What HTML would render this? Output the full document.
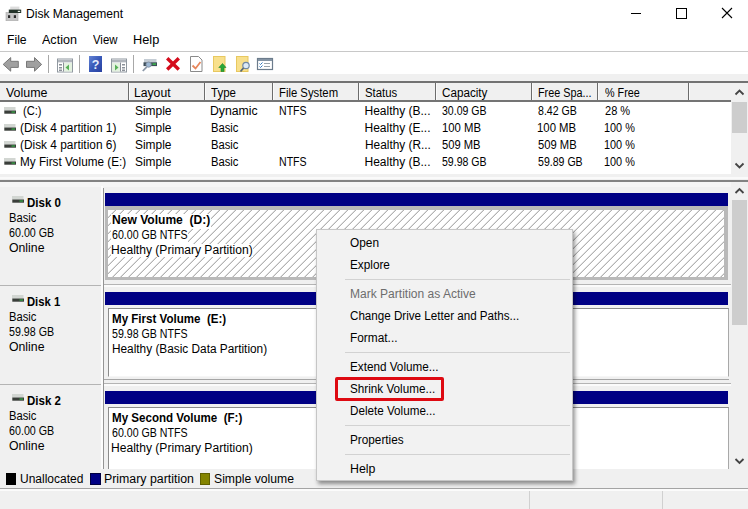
<!DOCTYPE html>
<html><head><meta charset="utf-8"><title>Disk Management</title>
<style>
*{box-sizing:border-box;margin:0;padding:0}
html,body{width:748px;height:509px;overflow:hidden;background:#fff}
body{font-family:"Liberation Sans",sans-serif;font-size:12px;color:#000;position:relative}
.a{position:absolute}
.t{position:absolute;white-space:pre;line-height:16px;height:16px;transform-origin:0 50%}
.hs{position:absolute;top:83px;width:1.500px;height:17px;background:#6c6c6c;margin-left:-0.400px;box-shadow:1px 0 0 #fafafa}
.di{position:absolute;width:12px;height:7px}
.bar{position:absolute;left:105px;width:622.500px;height:13px;background:#000084}
.left{position:absolute;left:0;width:101px;height:97px;background:#f0f0f0}
.vol{position:absolute;left:108px;width:621px;height:69px;background:#fff;border:1px solid #8c8c8c;border-bottom-color:#f6f6f6;border-right-color:#a8a8a8}
.dsep{position:absolute;left:0;width:731px;height:1px;background:#b4b4b4}
.sep{position:absolute;left:345px;width:225px;height:1px;background:#d2d2d2}
.tsep{position:absolute;top:55px;width:1px;height:18px;background:#a8a8a8}
</style></head><body>
<!-- title bar -->
<svg class="a" style="left:4px;top:5px" width="20" height="18" viewBox="4 5 20 18"><rect x="10.200" y="6.600" width="9.200" height="3.200" fill="#dcdcdc"/><rect x="6" y="12.500" width="12" height="8.200" fill="#c6c6c6" stroke="#a8a8a8" stroke-width=".6"/><rect x="8.800" y="9.600" width="12.400" height="3.400" fill="#24342a"/><rect x="17.800" y="10.800" width="2.400" height="1.200" fill="#e8f0e8"/><rect x="8" y="15.200" width="2.200" height="2.800" fill="#2c2c2c"/><rect x="13.800" y="15.200" width="2.200" height="2.800" fill="#2c2c2c"/></svg>
<svg class="a" style="left:625px;top:3px" width="115" height="22" viewBox="0 0 115 22"><path d="M6 10.500H16" stroke="#000" stroke-width="1" fill="none"/><rect x="51.500" y="5.500" width="10" height="10" stroke="#000" stroke-width="1" fill="none"/><path d="M97 5L107 15M107 5L97 15" stroke="#000" stroke-width="1.100" fill="none"/></svg>
<div class="a" style="left:0;top:51px;width:748px;height:1px;background:#c8c8c8"></div>
<!-- toolbar -->
<div class="a" style="left:0;top:74px;width:748px;height:8px;background:#f0f0f0"></div>
<i class="tsep" style="left:48px"></i><i class="tsep" style="left:79px"></i><i class="tsep" style="left:133px"></i>
<svg class="a" style="left:0;top:52px" width="290" height="24" viewBox="0 52 290 24">
<!-- back / forward arrows -->
<path d="M3.200 64.400L10.700 57.600V61.300H18.300V67.400H10.700V71.200Z" fill="#a0a0a0" stroke="#787878" stroke-width="1"/>
<path d="M41.600 64.400L34.500 57.600V61.300H26.500V67.400H34.500V71.200Z" fill="#a0a0a0" stroke="#787878" stroke-width="1"/>
<!-- console tree icons -->
<g transform="translate(0,.5)"><rect x="57.500" y="58.500" width="15" height="13" fill="#fff" stroke="#9098a0"/><rect x="58" y="59" width="14" height="3" fill="#c4c8ce"/><path d="M58 60.500H72" stroke="#8c949c" stroke-width=".7"/><rect x="59" y="63.500" width="3" height="1.500" fill="#8a9098"/><rect x="59" y="66.500" width="3" height="1.500" fill="#8a9098"/><rect x="59" y="69" width="3" height="1.500" fill="#8a9098"/><path d="M63.500 62V71" stroke="#8a9098"/><rect x="64" y="62.500" width="8" height="8.500" fill="#e4f2e0"/><path d="M69 64V70L65.500 67Z" fill="#58b058"/></g>
<g transform="translate(0,.5)"><rect x="111.500" y="58.500" width="15" height="13" fill="#fff" stroke="#9098a0"/><rect x="112" y="59" width="14" height="3" fill="#c4c8ce"/><path d="M112 60.500H126" stroke="#8c949c" stroke-width=".7"/><rect x="122" y="63.500" width="3" height="1.500" fill="#8a9098"/><rect x="122" y="66.500" width="3" height="1.500" fill="#8a9098"/><rect x="122" y="69" width="3" height="1.500" fill="#8a9098"/><path d="M120.500 62V71" stroke="#8a9098"/><rect x="112" y="62.500" width="8" height="8.500" fill="#e4f2e0"/><path d="M115 64V70L118.500 67Z" fill="#58b058"/></g>
<!-- help -->
<defs><linearGradient id="hg" x1="0" y1="0" x2="1" y2="1"><stop offset="0" stop-color="#6484d4"/><stop offset=".5" stop-color="#3858b8"/><stop offset="1" stop-color="#2840a0"/></linearGradient></defs>
<rect x="89" y="56" width="13" height="16" fill="url(#hg)"/>
<text x="95.500" y="69" font-family="Liberation Sans, sans-serif" font-weight="bold" font-size="12.500" fill="#e4ecfc" text-anchor="middle">?</text>
<!-- drive+magnifier -->
<rect x="144" y="59" width="12.500" height="3.500" fill="#c4ccd4"/><rect x="143.500" y="62.300" width="13.500" height="3.800" fill="#3c4c58"/><rect x="152.500" y="63.300" width="3.500" height="1.600" fill="#3cb44c"/><circle cx="148.600" cy="64.600" r="2.600" fill="#9cb8d4" stroke="#8494a8" stroke-width="1"/><path d="M146.800 66.800L142.800 71" stroke="#8c98a8" stroke-width="1.800"/>
<!-- red X -->
<path d="M167.200 58.300L178.800 69.500M178.800 58.300L167.200 69.500" stroke="#d40c1c" stroke-width="3.400"/>
<!-- doc w/ check -->
<path d="M190.500 56.500H198.500L202 60V71.500H190.500Z" fill="#fff" stroke="#8a8a8a"/><path d="M192.500 65.500L195.500 68.500L200.500 62" stroke="#e8875c" stroke-width="1.800" fill="none"/>
<!-- yellow docs -->
<rect x="213.500" y="56.500" width="11.500" height="15" fill="#f8e08c" stroke="#e8c860"/><path d="M221 71.500V67.500H218.800L222.500 63.500L226 67.500H224V71.500Z" fill="#28a838" stroke="#1c8428" stroke-width=".6"/>
<rect x="236.500" y="56.500" width="11.500" height="15" fill="#f8e08c" stroke="#e8c860"/><circle cx="246" cy="65.500" r="3.200" fill="#dceaf8" stroke="#7088a4" stroke-width="1.200"/><path d="M243.500 68L240.500 71.500" stroke="#566878" stroke-width="1.800"/>
<!-- checklist -->
<rect x="257.500" y="58.500" width="15" height="11" fill="#fff" stroke="#6c7c8c" stroke-width="1.200"/><rect x="258" y="59" width="14" height="2" fill="#8494a4"/><path d="M259.500 63.500L260.500 64.500L262.500 62.500M259.500 66.500L260.500 67.500L262.500 65.500" stroke="#3078c0" fill="none"/><path d="M264 63.500H270M264 66.500H270" stroke="#9aa4ac"/>
</svg>
<!-- list header -->
<div class="a" style="left:0;top:81px;width:748px;height:1.800px;background:#727272"></div><div class="a" style="left:0;top:83px;width:731px;height:17px;background:#f0f0f0"></div><div class="a" style="left:0;top:99.800px;width:731px;height:1.900px;background:#747474"></div>
<i class="hs" style="left:128px"></i><i class="hs" style="left:204px"></i><i class="hs" style="left:272px"></i><i class="hs" style="left:358px"></i><i class="hs" style="left:435px"></i><i class="hs" style="left:531px"></i><i class="hs" style="left:597px"></i><i class="hs" style="left:688px"></i>
<!-- list scrollbar -->
<div class="a" style="left:731px;top:83px;width:17px;height:91px;background:#f0f0f0"></div>
<div class="a" style="left:732px;top:101.500px;width:14.500px;height:31.500px;background:#cdcdcd"></div>
<svg class="a" style="left:731px;top:82px" width="17" height="93" viewBox="0 0 17 93"><path d="M4.500 12.500L8.500 8.500L12.500 12.500" stroke="#444" stroke-width="1.800" fill="none"/><path d="M4.500 81.500L8.500 85.500L12.500 81.500" stroke="#444" stroke-width="1.800" fill="none"/></svg>
<!-- row icons -->
<svg class="a" style="left:4px;top:107px" width="13" height="60" viewBox="0 0 13 60"><g id="dk"><rect x="0" y="0" width="11.500" height="3.600" fill="#d2d6d2"/><rect x="0.300" y="3.500" width="11.700" height="3.200" fill="#3a3e3a"/><rect x="7.500" y="4.400" width="3.500" height="1.300" fill="#34a444"/></g><use href="#dk" y="17"/><use href="#dk" y="34"/><use href="#dk" y="51"/></svg>
<!-- splitter -->
<div class="a" style="left:0;top:174px;width:748px;height:295px;background:#f0f0f0"></div>
<div class="a" style="left:0;top:177px;width:748px;height:2px;background:#fafafa"></div>
<div class="a" style="left:0;top:180px;width:748px;height:2px;background:#828282"></div>
<div class="a" style="left:0;top:182px;width:731px;height:5px;background:#f5f5f5"></div>
<!-- lower pane -->
<div class="a" style="left:101px;top:186px;width:2px;height:283px;background:#fcfcfc"></div>
<div class="a" style="left:103px;top:188px;width:1px;height:281px;background:#949494"></div>
<!-- disk 0 -->
<div class="bar" style="top:193px"></div>
<div class="a" style="left:105px;top:206px;width:623px;height:73.700px;background:#b9b9b9"></div>
<svg class="a" style="left:108px;top:209.500px" width="616" height="67" viewBox="0 0 616 67"><defs><pattern id="h" width="8" height="8" patternUnits="userSpaceOnUse" x="-0.300" y="0"><path d="M-1 9L9 -1M-1 1L1 -1M7 9L9 7" stroke="#808080" stroke-width=".85"/></pattern></defs><rect width="616" height="67" fill="#fff"/><rect width="616" height="67" fill="url(#h)"/></svg>
<div class="a" style="left:111.400px;top:213.500px;width:100px;height:15px;background:#fff"></div>
<div class="a" style="left:111.400px;top:228.500px;width:76.200px;height:15px;background:#fff"></div>
<div class="a" style="left:111.400px;top:243.500px;width:141.600px;height:13.500px;background:#fff"></div>
<div class="dsep" style="top:285px;width:101px"></div><div class="dsep" style="top:284px;left:104px;width:627px"></div><div class="dsep" style="top:285px;left:104px;width:627px;height:2px;background:#fbfbfb"></div>
<!-- disk 1 -->
<div class="bar" style="top:292px"></div>
<div class="vol" style="top:308px"></div><div class="dsep" style="top:379px;left:104px;width:625px;background:#a6a6a6"></div>
<div class="dsep" style="top:384px;width:101px"></div><div class="dsep" style="top:383px;left:104px;width:627px"></div><div class="dsep" style="top:384px;left:104px;width:627px;height:2px;background:#fbfbfb"></div>
<!-- disk 2 -->
<div class="bar" style="top:391px"></div>
<div class="vol" style="top:407px;height:62px;border-bottom:none"></div>
<!-- disk icons -->
<svg class="a" style="left:11.700px;top:196.100px" width="13" height="210" viewBox="0 0 13 210"><use href="#dk" y="0"/><use href="#dk" y="99"/><use href="#dk" y="198"/></svg>
<!-- lower scrollbar -->
<div class="a" style="left:732px;top:184px;width:16px;height:285px;background:#f0f0f0"></div>
<div class="a" style="left:732px;top:199.500px;width:14.500px;height:125.500px;background:#cdcdcd"></div>
<svg class="a" style="left:731px;top:184px" width="17" height="285" viewBox="0 0 17 285"><path d="M4.500 9L8.500 5L12.500 9" stroke="#444" stroke-width="1.800" fill="none"/><path d="M4.500 275L8.500 279L12.500 275" stroke="#444" stroke-width="1.800" fill="none"/></svg>
<!-- legend + status -->
<div class="a" style="left:0;top:469px;width:748px;height:40px;background:#f0f0f0"></div>
<div class="a" style="left:5.500px;top:473px;width:10.500px;height:11.500px;background:#000"></div>
<div class="a" style="left:90px;top:473px;width:10.500px;height:11.500px;background:#000084;border:1px solid #000040"></div>
<div class="a" style="left:199.500px;top:473px;width:10.500px;height:11.500px;background:#848400;border:1px solid #606000"></div>
<div class="a" style="left:0;top:487.600px;width:748px;height:1px;background:#a4a4a4"></div>
<div class="a" style="left:0;top:488.600px;width:748px;height:2px;background:#fbfbfb"></div>
<div class="a" style="left:529px;top:491px;width:1px;height:18px;background:#d0d0d0"></div>
<div class="a" style="left:662px;top:491px;width:1px;height:18px;background:#d0d0d0"></div>
<div class="t" id="t0" style="left:26.33px;top:6.2px;font-size:12.4px;transform:scaleX(0.9722);">Disk Management</div>
<div class="t" id="t1" style="left:7.32px;top:32.0px;font-size:12.4px;transform:scaleX(0.9838);">File</div>
<div class="t" id="t2" style="left:42.30px;top:32.0px;font-size:12.4px;transform:scaleX(1.0133);">Action</div>
<div class="t" id="t3" style="left:93.00px;top:32.0px;font-size:12.4px;transform:scaleX(0.9159);">View</div>
<div class="t" id="t4" style="left:133.27px;top:32.0px;font-size:12.4px;transform:scaleX(1.0292);">Help</div>
<div class="t" id="t5" style="left:6.00px;top:84.6px;font-size:12px;transform:scaleX(1.0380);">Volume</div>
<div class="t" id="t6" style="left:134.49px;top:84.6px;font-size:12px;transform:scaleX(1.0143);">Layout</div>
<div class="t" id="t7" style="left:211.26px;top:84.6px;font-size:12px;transform:scaleX(0.9584);">Type</div>
<div class="t" id="t8" style="left:278.56px;top:84.6px;font-size:12px;transform:scaleX(0.9426);">File System</div>
<div class="t" id="t9" style="left:365.03px;top:84.6px;font-size:12px;transform:scaleX(0.9455);">Status</div>
<div class="t" id="t10" style="left:442.01px;top:84.6px;font-size:12px;transform:scaleX(0.9730);">Capacity</div>
<div class="t" id="t11" style="left:537.50px;top:84.6px;font-size:12px;transform:scaleX(0.9013);">Free Spa...</div>
<div class="t" id="t12" style="left:604.55px;top:84.6px;font-size:12px;transform:scaleX(0.9007);">% Free</div>
<div class="t" id="t13" style="left:23.10px;top:103.0px;font-size:12px;transform:scaleX(0.9297);">(C:)</div>
<div class="t" id="t14" style="left:135.00px;top:103.0px;font-size:12px;transform:scaleX(0.9930);">Simple</div>
<div class="t" id="t15" style="left:210.48px;top:103.0px;font-size:12px;transform:scaleX(1.0210);">Dynamic</div>
<div class="t" id="t16" style="left:278.62px;top:103.0px;font-size:12px;transform:scaleX(0.8807);">NTFS</div>
<div class="t" id="t17" style="left:364.50px;top:103.0px;font-size:12px;transform:scaleX(1.0000);">Healthy (B...</div>
<div class="t" id="t18" style="left:442.06px;top:103.0px;font-size:12px;transform:scaleX(0.8788);">30.09 GB</div>
<div class="t" id="t19" style="left:537.96px;top:103.0px;font-size:12px;transform:scaleX(0.8814);">8.42 GB</div>
<div class="t" id="t20" style="left:604.54px;top:103.0px;font-size:12px;transform:scaleX(0.9208);">28 %</div>
<div class="t" id="t21" style="left:19.76px;top:120.0px;font-size:12px;transform:scaleX(0.9896);">(Disk 4 partition 1)</div>
<div class="t" id="t22" style="left:135.00px;top:120.0px;font-size:12px;transform:scaleX(0.9930);">Simple</div>
<div class="t" id="t23" style="left:210.56px;top:120.0px;font-size:12px;transform:scaleX(0.9357);">Basic</div>
<div class="t" id="t24" style="left:364.50px;top:120.0px;font-size:12px;transform:scaleX(1.0000);">Healthy (E...</div>
<div class="t" id="t25" style="left:441.56px;top:120.0px;font-size:12px;transform:scaleX(0.9434);">100 MB</div>
<div class="t" id="t26" style="left:537.45px;top:120.0px;font-size:12px;transform:scaleX(0.9459);">100 MB</div>
<div class="t" id="t27" style="left:604.09px;top:120.0px;font-size:12px;transform:scaleX(0.9069);">100 %</div>
<div class="t" id="t28" style="left:19.76px;top:137.0px;font-size:12px;transform:scaleX(0.9896);">(Disk 4 partition 6)</div>
<div class="t" id="t29" style="left:135.00px;top:137.0px;font-size:12px;transform:scaleX(0.9930);">Simple</div>
<div class="t" id="t30" style="left:210.56px;top:137.0px;font-size:12px;transform:scaleX(0.9357);">Basic</div>
<div class="t" id="t31" style="left:364.51px;top:137.0px;font-size:12px;transform:scaleX(0.9884);">Healthy (R...</div>
<div class="t" id="t32" style="left:442.03px;top:137.0px;font-size:12px;transform:scaleX(0.9317);">509 MB</div>
<div class="t" id="t33" style="left:537.93px;top:137.0px;font-size:12px;transform:scaleX(0.9342);">509 MB</div>
<div class="t" id="t34" style="left:604.09px;top:137.0px;font-size:12px;transform:scaleX(0.9069);">100 %</div>
<div class="t" id="t35" style="left:19.52px;top:154.0px;font-size:12px;transform:scaleX(0.9766);">My First Volume (E:)</div>
<div class="t" id="t36" style="left:135.00px;top:154.0px;font-size:12px;transform:scaleX(0.9930);">Simple</div>
<div class="t" id="t37" style="left:210.56px;top:154.0px;font-size:12px;transform:scaleX(0.9357);">Basic</div>
<div class="t" id="t38" style="left:278.62px;top:154.0px;font-size:12px;transform:scaleX(0.8807);">NTFS</div>
<div class="t" id="t39" style="left:364.50px;top:154.0px;font-size:12px;transform:scaleX(1.0000);">Healthy (B...</div>
<div class="t" id="t40" style="left:442.06px;top:154.0px;font-size:12px;transform:scaleX(0.8788);">59.98 GB</div>
<div class="t" id="t41" style="left:537.96px;top:154.0px;font-size:12px;transform:scaleX(0.8808);">59.89 GB</div>
<div class="t" id="t42" style="left:604.09px;top:154.0px;font-size:12px;transform:scaleX(0.9069);">100 %</div>
<div class="t" id="t43" style="left:26.98px;top:194.5px;font-size:12px;font-weight:bold;transform:scaleX(0.9577);">Disk 0</div>
<div class="t" id="t44" style="left:8.67px;top:210.0px;font-size:12px;transform:scaleX(0.9321);">Basic</div>
<div class="t" id="t45" style="left:9.15px;top:224.6px;font-size:12px;transform:scaleX(0.8929);">60.00 GB</div>
<div class="t" id="t46" style="left:9.09px;top:239.8px;font-size:12px;transform:scaleX(1.0222);">Online</div>
<div class="t" id="t47" style="left:111.75px;top:211.5px;font-size:12px;font-weight:bold;transform:scaleX(1.0052);">New Volume  (D:)</div>
<div class="t" id="t48" style="left:112.06px;top:226.5px;font-size:12px;transform:scaleX(0.8843);">60.00 GB NTFS</div>
<div class="t" id="t49" style="left:111.49px;top:242.0px;font-size:12px;transform:scaleX(1.0072);">Healthy (Primary Partition)</div>
<div class="t" id="t50" style="left:27.00px;top:293.5px;font-size:12px;font-weight:bold;transform:scaleX(0.9372);">Disk 1</div>
<div class="t" id="t51" style="left:8.67px;top:309.0px;font-size:12px;transform:scaleX(0.9321);">Basic</div>
<div class="t" id="t52" style="left:9.15px;top:323.6px;font-size:12px;transform:scaleX(0.8909);">59.98 GB</div>
<div class="t" id="t53" style="left:9.09px;top:338.8px;font-size:12px;transform:scaleX(1.0222);">Online</div>
<div class="t" id="t54" style="left:111.78px;top:310.5px;font-size:12px;font-weight:bold;transform:scaleX(0.9638);">My First Volume  (E:)</div>
<div class="t" id="t55" style="left:112.06px;top:325.5px;font-size:12px;transform:scaleX(0.8843);">59.98 GB NTFS</div>
<div class="t" id="t56" style="left:111.51px;top:341.0px;font-size:12px;transform:scaleX(0.9856);">Healthy (Basic Data Partition)</div>
<div class="t" id="t57" style="left:26.98px;top:392.5px;font-size:12px;font-weight:bold;transform:scaleX(0.9577);">Disk 2</div>
<div class="t" id="t58" style="left:8.67px;top:408.0px;font-size:12px;transform:scaleX(0.9321);">Basic</div>
<div class="t" id="t59" style="left:9.15px;top:422.6px;font-size:12px;transform:scaleX(0.8929);">60.00 GB</div>
<div class="t" id="t60" style="left:9.09px;top:437.8px;font-size:12px;transform:scaleX(1.0222);">Online</div>
<div class="t" id="t61" style="left:111.78px;top:409.5px;font-size:12px;font-weight:bold;transform:scaleX(0.9645);">My Second Volume  (F:)</div>
<div class="t" id="t62" style="left:112.06px;top:424.5px;font-size:12px;transform:scaleX(0.8843);">60.00 GB NTFS</div>
<div class="t" id="t63" style="left:111.49px;top:440.0px;font-size:12px;transform:scaleX(1.0072);">Healthy (Primary Partition)</div>
<div class="t" id="t64" style="left:20.30px;top:470.7px;font-size:12px;transform:scaleX(0.9992);">Unallocated</div>
<div class="t" id="t65" style="left:104.27px;top:470.7px;font-size:12px;transform:scaleX(1.0286);">Primary partition</div>
<div class="t" id="t66" style="left:214.49px;top:470.7px;font-size:12px;transform:scaleX(1.0161);">Simple volume</div>
<!-- context menu -->
<div class="a" style="left:316px;top:229px;width:257px;height:252px;background:#f2f2f2;border:1px solid #c6c6c6;box-shadow:2px 3px 4px rgba(0,0,0,.42)"></div>
<div class="sep" style="top:279px"></div><div class="sep" style="top:352px"></div><div class="sep" style="top:425px"></div><div class="sep" style="top:454px"></div>
<div class="a" style="left:335px;top:377px;width:108.500px;height:23.500px;border:3px solid #de0a12;border-radius:2px"></div>
<div class="t" id="m0" style="left:350.21px;top:235.0px;transform:scaleX(0.9876);">Open</div>
<div class="t" id="m1" style="left:349.72px;top:256.6px;transform:scaleX(0.9809);">Explore</div>
<div class="t" id="m2" style="left:349.70px;top:285.8px;color:#6d6d6d;transform:scaleX(1.0024);">Mark Partition as Active</div>
<div class="t" id="m3" style="left:350.22px;top:308.0px;transform:scaleX(0.9685);">Change Drive Letter and Paths...</div>
<div class="t" id="m4" style="left:349.71px;top:329.7px;transform:scaleX(0.9891);">Format...</div>
<div class="t" id="m5" style="left:349.72px;top:358.8px;transform:scaleX(0.9758);">Extend Volume...</div>
<div class="t" id="m6" style="left:350.21px;top:381.0px;transform:scaleX(0.9749);">Shrink Volume...</div>
<div class="t" id="m7" style="left:349.73px;top:403.0px;transform:scaleX(0.9721);">Delete Volume...</div>
<div class="t" id="m8" style="left:349.72px;top:431.5px;transform:scaleX(0.9803);">Properties</div>
<div class="t" id="m9" style="left:349.67px;top:460.8px;transform:scaleX(1.0280);">Help</div>
</body></html>
